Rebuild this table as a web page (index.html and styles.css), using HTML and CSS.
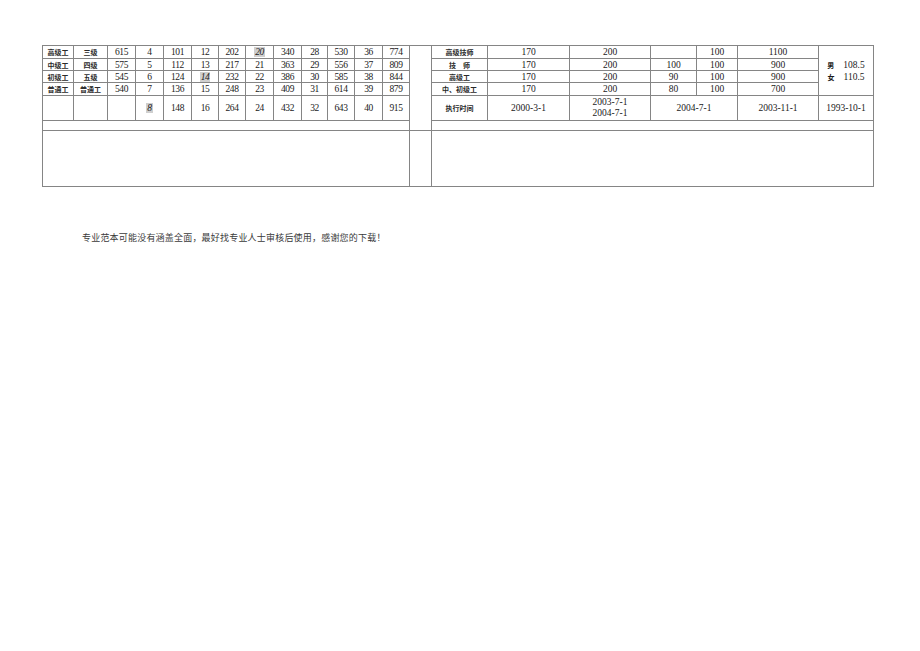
FILE: index.html
```html
<!DOCTYPE html>
<html lang="zh">
<head>
<meta charset="utf-8">
<title>工资标准表</title>
<link rel="stylesheet" href="styles.css">
</head>
<body>
<div class="page">
  <table class="sheet">
    <colgroup>
      <col class="w31"><col class="w34"><col class="w28"><col class="w28"><col class="w28"><col class="w27"><col class="w27"><col class="w28"><col class="w28"><col class="w26"><col class="w27"><col class="w28"><col class="w27">
      <col class="w22">
      <col class="w56"><col class="w82"><col class="w81"><col class="w46"><col class="w41"><col class="w81"><col class="w55">
    </colgroup>
    <tr class="r13">
      <td class="lab">高级工</td><td class="lab">三级</td><td class="n">615</td><td class="n">4</td><td class="n">101</td><td class="n">12</td><td class="n">202</td><td class="n"><span class="hl">20</span></td><td class="n">340</td><td class="n">28</td><td class="n">530</td><td class="n">36</td><td class="n">774</td>
      <td class="gap" rowspan="6"></td>
      <td class="lab">高级技师</td><td class="m">170</td><td class="m">200</td><td class="m"></td><td class="m">100</td><td class="m">1100</td>
      <td class="sex" rowspan="4"><div class="sexrow"><span class="lab2">男</span><span>108.5</span></div><div class="sexrow"><span class="lab2">女</span><span>110.5</span></div></td>
    </tr>
    <tr class="r12">
      <td class="lab">中级工</td><td class="lab">四级</td><td class="n">575</td><td class="n">5</td><td class="n">112</td><td class="n">13</td><td class="n">217</td><td class="n">21</td><td class="n">363</td><td class="n">29</td><td class="n">556</td><td class="n">37</td><td class="n">809</td>
      <td class="lab">技　师</td><td class="m">170</td><td class="m">200</td><td class="m">100</td><td class="m">100</td><td class="m">900</td>
    </tr>
    <tr class="r12">
      <td class="lab">初级工</td><td class="lab">五级</td><td class="n">545</td><td class="n">6</td><td class="n">124</td><td class="n"><span class="hl">14</span></td><td class="n">232</td><td class="n">22</td><td class="n">386</td><td class="n">30</td><td class="n">585</td><td class="n">38</td><td class="n">844</td>
      <td class="lab">高级工</td><td class="m">170</td><td class="m">200</td><td class="m">90</td><td class="m">100</td><td class="m">900</td>
    </tr>
    <tr class="r13">
      <td class="lab">普通工</td><td class="lab">普通工</td><td class="n">540</td><td class="n">7</td><td class="n">136</td><td class="n">15</td><td class="n">248</td><td class="n">23</td><td class="n">409</td><td class="n">31</td><td class="n">614</td><td class="n">39</td><td class="n">879</td>
      <td class="lab">中、初级工</td><td class="m">170</td><td class="m">200</td><td class="m">80</td><td class="m">100</td><td class="m">700</td>
    </tr>
    <tr class="r25">
      <td></td><td></td><td></td><td class="n"><span class="hl">8</span></td><td class="n">148</td><td class="n">16</td><td class="n">264</td><td class="n">24</td><td class="n">432</td><td class="n">32</td><td class="n">643</td><td class="n">40</td><td class="n">915</td>
      <td class="lab">执行时间</td><td class="m">2000-3-1</td><td class="m two">2003-7-1<br>2004-7-1</td><td class="m" colspan="2">2004-7-1</td><td class="m">2003-11-1</td><td class="m">1993-10-1</td>
    </tr>
    <tr class="r10">
      <td colspan="13"></td>
      <td colspan="7"></td>
    </tr>
    <tr class="r56">
      <td colspan="13"></td>
      <td></td>
      <td colspan="7"></td>
    </tr>
  </table>
  <p class="note">专业范本可能没有涵盖全面，最好找专业人士审核后使用，感谢您的下载！</p>
</div>
</body>
</html>
```

FILE: styles.css
```css
html, body {
  margin: 0;
  padding: 0;
  background: #ffffff;
}
.page {
  padding: 45px 0 0 42px;
}
.sheet {
  border-collapse: collapse;
  table-layout: fixed;
  width: 830px;
  font-family: "Liberation Serif", "Noto Sans CJK SC", serif;
  color: #1a1a1a;
}
.sheet td {
  border: 1px solid #858585;
  padding: 0;
  text-align: center;
  vertical-align: middle;
  overflow: hidden;
  white-space: nowrap;
}
.w22 { width: 22px; }
.w26 { width: 26px; }
.w27 { width: 27px; }
.w28 { width: 28px; }
.w31 { width: 31px; }
.w34 { width: 34px; }
.w41 { width: 41px; }
.w46 { width: 46px; }
.w55 { width: 55px; }
.w56 { width: 56px; }
.w81 { width: 81px; }
.w82 { width: 82px; }

.r10 { height: 10px; }
.r12 { height: 12px; }
.r13 { height: 13px; }
.r25 { height: 25px; }
.r56 { height: 56px; }

.sheet tr.r12 td, .sheet tr.r13 td { line-height: 10px; }

.lab {
  font-family: "Noto Sans CJK SC", sans-serif;
  font-size: 7px;
  font-weight: 700;
  color: #2a2a2a;
}
.n {
  font-size: 9.5px;
  letter-spacing: -0.4px;
}
.m {
  font-size: 9.5px;
}
.two {
  line-height: 11px;
}
.hl {
  display: inline-block;
  background: #cfcfcf;
  font-style: italic;
  padding: 0 1px;
  line-height: 10px;
}
.sex {
  font-size: 9.5px;
}
.sexrow {
  display: flex;
  justify-content: center;
  gap: 9px;
  line-height: 12px;
}
.lab2 {
  font-family: "Noto Sans CJK SC", sans-serif;
  font-size: 7px;
  font-weight: 700;
}
.note {
  margin: 44px 0 0 40px;
  font-family: "Noto Sans CJK SC", sans-serif;
  font-size: 9px;
  letter-spacing: 0.2px;
  color: #3a3a3a;
}
```
